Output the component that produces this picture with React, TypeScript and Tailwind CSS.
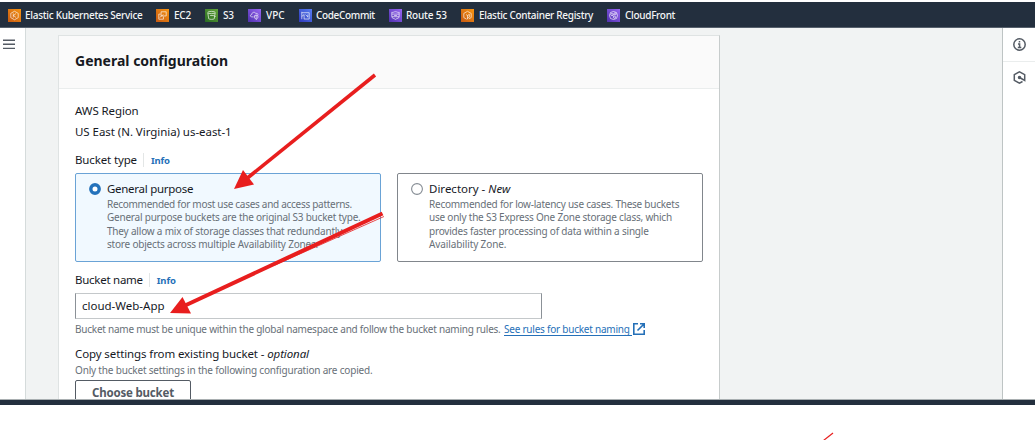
import type { ReactNode } from "react";

type Kind = "eks" | "ec2" | "s3" | "vpc" | "commit" | "route" | "ecr" | "cdn";

const glyphs: Record<Kind, ReactNode> = {
  eks: (
    <>
      <path d="M7 2.400l4 2.300v4.600L7 11.600 3 9.300V4.700z" />
      <path d="M5.700 4.800v4.400M8.700 4.800L5.900 7l2.800 2.200" />
    </>
  ),
  ec2: (
    <>
      <path d="M5.500 3h5.500v4.500H5.500z" />
      <path d="M5 5.500H3v5.500h5V8.200M4 9l4-3" />
    </>
  ),
  s3: (
    <>
      <ellipse cx="7" cy="3.800" rx="4" ry="1.200" />
      <path d="M3 4l1 6.500c1 .9 5 .9 6 0L11 4M5.500 7H9l2.500 1.200" />
    </>
  ),
  vpc: (
    <>
      <path d="M6 8.500H4C2 8.300 2.200 6 4 6c0-2.700 3.600-3.300 4.400-1.200 1.600-.4 2.400.5 2.400 1.500" />
      <path d="M7 7.200l1.800-.7 1.900.7v2.300l-1.900 1.800L7 9.500zM8.800 6.500v4.700" />
    </>
  ),
  commit: (
    <>
      <path d="M3 3v8M3 4h8v6.800H5.500M3 8l2.500-2v5" />
      <path d="M7 6l2.500 2.500M9.500 6v3" />
    </>
  ),
  route: (
    <>
      <path d="M3 3.500c1.500.6 2.500-.6 4-.6s2.500 1.200 4 .6v5c0 1.500-2.500 1.500-4 2.700C5.500 10 3 10 3 8.500z" />
      <path d="M3.200 5.500h7.600M3.200 8.300h7.600M5.500 7h3" />
    </>
  ),
  ecr: (
    <>
      <path d="M6 11L3 9.200V4.800L7 2.500l4 2.300v4.400l-2.500 1.500" />
      <path d="M7 11V7l2-1.200v3L7 10M5.500 6L7 7" />
    </>
  ),
  cdn: (
    <>
      <circle cx="7" cy="7" r="4.300" />
      <circle cx="5.300" cy="6" r="1.200" />
      <circle cx="8.700" cy="5.200" r="1.100" />
      <circle cx="8" cy="8.800" r="1.200" />
      <path d="M6.200 6.800l1 1.200M6.500 5.800l1-.4" />
    </>
  ),
};

const services: { name: string; kind: Kind; bg: string; item: string; text: string }[] = [
  { name: "Elastic Kubernetes Service", kind: "eks", bg: "from-[#c65a12] to-[#f79411]", item: "w-[148px] gap-1", text: "tracking-[-0.28px]" },
  { name: "EC2", kind: "ec2", bg: "from-[#c65a12] to-[#f79411]", item: "w-[49px] gap-[5px]", text: "tracking-[-0.2px]" },
  { name: "S3", kind: "s3", bg: "from-[#276b22] to-[#64a63a]", item: "w-[43px] gap-[5px]", text: "tracking-[-0.2px]" },
  { name: "VPC", kind: "vpc", bg: "from-[#5030ae] to-[#9a66f4]", item: "w-[51px] gap-[5px]", text: "tracking-[0px]" },
  { name: "CodeCommit", kind: "commit", bg: "from-[#3038ba] to-[#587df4]", item: "w-[90px] gap-1", text: "tracking-[-0.35px]" },
  { name: "Route 53", kind: "route", bg: "from-[#5030ae] to-[#9a66f4]", item: "w-[72px] gap-1", text: "tracking-[-0.2px]" },
  { name: "Elastic Container Registry", kind: "ecr", bg: "from-[#c65a12] to-[#f79411]", item: "w-[146px] gap-[5px]", text: "tracking-[-0.3px]" },
  { name: "CloudFront", kind: "cdn", bg: "from-[#5030ae] to-[#9a66f4]", item: "w-[80px] gap-[5px]", text: "tracking-[-0.3px]" },
];

function NavBar() {
  return (
    <nav className="mt-0.5 flex h-[26px] w-[1035px] shrink-0 items-center border-b border-[#56606c] bg-[#232f3e] pl-2 pt-px">
      {services.map((s) => (
        <div key={s.name} className={`flex shrink-0 items-center ${s.item}`}>
          <span className={`flex size-[13px] shrink-0 bg-linear-to-tr ${s.bg}`}>
            <svg viewBox="0 0 14 14" className="size-full" fill="none" stroke="#fff" strokeOpacity=".85" strokeWidth=".8">
              {glyphs[s.kind]}
            </svg>
          </span>
          <span className={`text-[10px] font-medium text-[#f4f5f6] ${s.text}`}>{s.name}</span>
        </div>
      ))}
    </nav>
  );
}

function Label({ text, className }: { text: string; className: string }) {
  return (
    <div className="flex h-5 items-center">
      <span className={`text-[11.5px] ${className}`}>{text}</span>
      <span className="ml-1.5 h-3.5 w-px bg-[#e3e6e6]" />
      <span className="ml-[7px] pt-0.5 text-[9.5px] font-bold tracking-[-0.15px] text-[#2570b8]">Info</span>
    </div>
  );
}

function Option({ selected, title, lines }: { selected?: boolean; title: ReactNode; lines: { text: string; cls: string }[] }) {
  return (
    <div
      className={`flex h-[89px] w-[306px] rounded-[2px] border pl-[13px] pt-[5px] ${
        selected ? "border-[#6aa3d6] bg-[#f1f9ff]" : "border-[#81868c] bg-white"
      }`}
    >
      <svg className="mt-1 size-3 shrink-0" viewBox="0 0 12 12" fill="#fff">
        {selected ? (
          <circle cx="6" cy="6" r="4.200" stroke="#2472bb" strokeWidth="3.400" />
        ) : (
          <circle cx="6" cy="6" r="5.400" stroke="#858c94" strokeWidth="1.100" />
        )}
      </svg>
      <div className="ml-1.5 whitespace-nowrap">
        <div className="flex h-[19px] items-center pt-px text-[11.5px] text-[#16191f]">{title}</div>
        {lines.map((l) => (
          <div key={l.text} className="h-[13.3px] text-[10px] leading-[13.3px] text-[#687078]">
            <span className={l.cls}>{l.text}</span>
          </div>
        ))}
      </div>
    </div>
  );
}

function Arrows() {
  return (
    <svg className="pointer-events-none absolute left-0 top-0" width="1036" height="440" fill="none">
      <g stroke="#e81e1e">
        <path d="M375 75L245 180" strokeWidth="3.6" />
        <path d="M382.500 213.500L184 306" strokeWidth="4" />
        <path d="M384 216.500L275 265" strokeWidth=".8" />
        <path d="M823.500 440.500L833 433" strokeWidth="1.200" />
      </g>
      <path d="M234 189L243 170L254 184.500Z" fill="#e81e1e" />
      <path d="M170 313L182.500 297L191 313.500Z" fill="#e81e1e" />
    </svg>
  );
}

export default function App() {
  return (
    <div className="relative flex h-[440px] w-[1036px] flex-col overflow-hidden whitespace-nowrap bg-white font-['Noto_Sans','Open_Sans',sans-serif] text-[#16191f]">
      <NavBar />
      <div className="flex h-[372px] w-[1035px] shrink-0 overflow-hidden border-b border-[#a9afb1] bg-[#f1f3f3]">
        <aside className="w-[26px] shrink-0 border-r border-[#d5dbdb] bg-white pl-[3px] pt-[11px]">
          <svg className="h-3 w-3" viewBox="0 0 12 12" stroke="#545b64" strokeWidth="1.400">
            <path d="M0 1.200h12M0 5.300h12M0 9.400h12" />
          </svg>
        </aside>
        <main className="flex-1 pl-8 pt-[7px]">
          <section className="h-[380px] w-[662px] border border-b-0 border-[#dfe3e3] border-r-[#c7cccc] bg-white">
            <header className="flex h-[53px] items-center border-b border-[#eaeded] bg-[#fafafa] pl-4 pb-[3px]">
              <h2 className="text-[14px] font-bold">General configuration</h2>
            </header>
            <div className="pl-4 pt-3">
              <div className="flex h-5 items-center text-[11.5px] tracking-[-0.1px]">AWS Region</div>
              <div className="flex h-[22px] items-center text-[11.5px] tracking-[-0.05px]">US East (N. Virginia) us-east-1</div>
              <div className="mt-[7px]">
                <Label text="Bucket type" className="tracking-[-0.14px]" />
              </div>
              <div className="mt-[3px] flex gap-4">
                <Option
                  selected
                  title={<span className="tracking-[-0.28px]">General purpose</span>}
                  lines={[
                    { text: "Recommended for most use cases and access patterns.", cls: "tracking-[-0.29px]" },
                    { text: "General purpose buckets are the original S3 bucket type.", cls: "tracking-[-0.22px]" },
                    { text: "They allow a mix of storage classes that redundantly", cls: "tracking-[-0.19px]" },
                    { text: "store objects across multiple Availability Zones.", cls: "tracking-[-0.2px]" },
                  ]}
                />
                <Option
                  title={<span>Directory - <i>New</i></span>}
                  lines={[
                    { text: "Recommended for low-latency use cases. These buckets", cls: "tracking-[-0.24px]" },
                    { text: "use only the S3 Express One Zone storage class, which", cls: "tracking-[-0.22px]" },
                    { text: "provides faster processing of data within a single", cls: "tracking-[-0.2px]" },
                    { text: "Availability Zone.", cls: "tracking-[-0.11px]" },
                  ]}
                />
              </div>
              <div className="mt-2">
                <Label text="Bucket name" className="tracking-[-0.26px]" />
              </div>
              <div className="mt-[3px] flex h-[26px] w-[467px] items-center border border-[#c4c8ca] border-x-[#8b9197] pl-1.5 text-[11.5px]">
                <span>cloud-Web-App</span>
              </div>
              <div className="flex h-5 items-center text-[10px] text-[#687078]">
                <span className="w-[429px] tracking-[-0.235px]">
                  Bucket name must be unique within the global namespace and follow the bucket naming rules.
                </span>
                <a className="h-[13px] w-[128px] border-b border-[#2570b8] leading-[13px] tracking-[-0.23px] text-[#2570b8]">
                  See rules for bucket naming
                </a>
                <svg className="ml-px size-3" viewBox="0 0 12 12" fill="none" stroke="#2570b8" strokeWidth="1.600">
                  <path d="M5 .8H.8v10.400h10.400V7M7 .8h4.200V5M11 1L4.500 7.500" />
                </svg>
              </div>
              <div className="mt-[5px] flex h-5 items-center text-[11.5px] tracking-[-0.11px]">
                <span>Copy settings from existing bucket - <i>optional</i></span>
              </div>
              <div className="flex h-3 items-center text-[10px] text-[#687078]">
                <span className="tracking-[-0.18px]">Only the bucket settings in the following configuration are copied.</span>
              </div>
              <button className="mt-1 flex h-[26px] w-[116px] items-center justify-center rounded-[2px] border border-[#545b64] text-[11.5px] font-bold tracking-[-0.2px] text-[#545b64]">
                Choose bucket
              </button>
            </div>
          </section>
        </main>
        <aside className="flex w-[33px] shrink-0 flex-col border-l border-[#bec4c4] bg-white text-[#545b64]">
          <div className="flex h-[34px] items-center justify-center border-b border-[#eaeded]">
            <svg className="size-[13px]" viewBox="0 0 13 13" fill="none" stroke="currentColor" strokeWidth="1.500">
              <circle cx="6.500" cy="6.500" r="5.700" />
              <path d="M6.500 3v1.500M5 6h1.600v3.300M4.800 9.500h3.500" />
            </svg>
          </div>
          <div className="flex h-[31px] items-center justify-center">
            <svg className="size-[13px]" viewBox="0 0 13 13" fill="none" stroke="currentColor" strokeWidth="1.500">
              <path d="M9.500 10.500L6.500 12.100 1.300 9.400V3.600L6.500.9l5.200 2.700v5.800L6.500 6.500" />
              <circle cx="6.500" cy="6.500" r="1" fill="currentColor" />
            </svg>
          </div>
        </aside>
      </div>
      <div className="h-[5px] w-[1035px] shrink-0 bg-[#232f3e]" />
      <Arrows />
    </div>
  );
}
